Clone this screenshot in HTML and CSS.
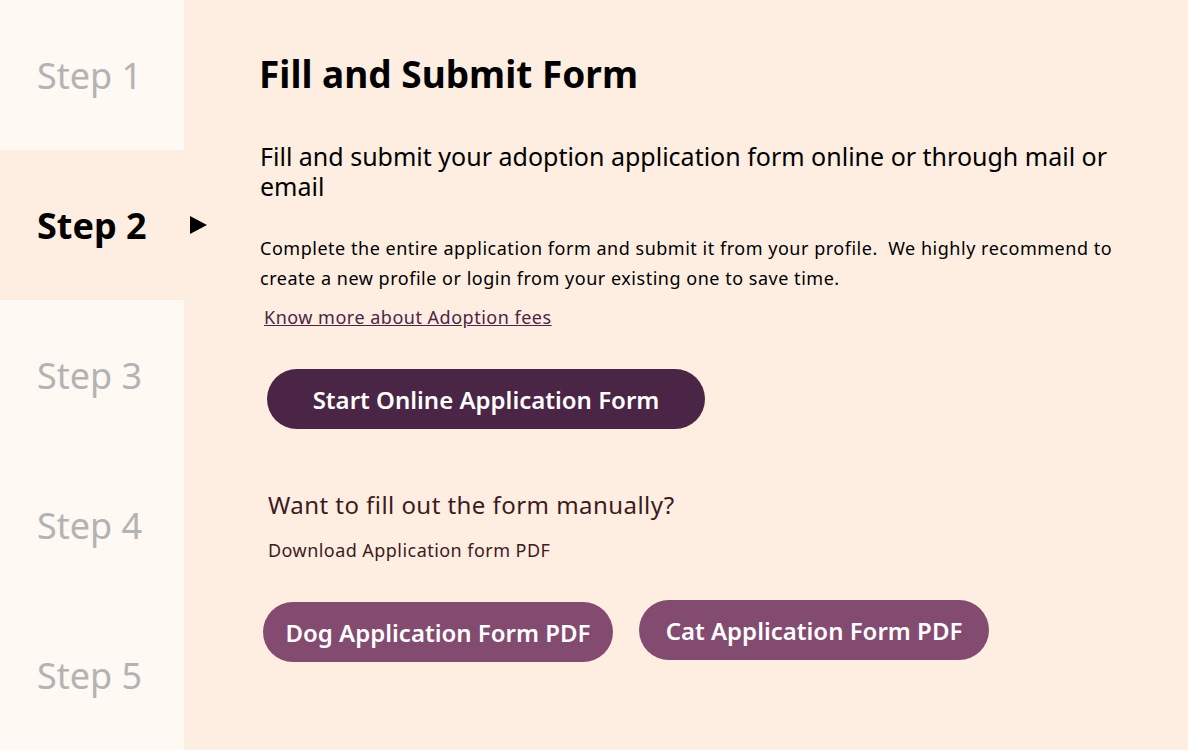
FILE: index.html
```html
<!DOCTYPE html>
<html lang="en">
<head>
<meta charset="utf-8">
<title>Fill and Submit Form</title>
<link rel="stylesheet" href="styles.css">
</head>
<body>
<div class="page">
  <aside class="steps">
    <div class="step">Step 1</div>
    <div class="step active">Step 2 <span class="arrow"></span></div>
    <div class="step">Step 3</div>
    <div class="step">Step 4</div>
    <div class="step">Step 5</div>
  </aside>
  <main class="content">
    <h1 class="title">Fill and Submit Form</h1>
    <p class="lead">Fill and submit your adoption application form online or through mail or email</p>
    <p class="body">Complete the entire application form and submit it from your profile.&nbsp; We highly recommend to create a new profile or login from your existing one to save time.</p>
    <a class="link" href="#">Know more about Adoption fees</a>
    <div class="primary-row"><a class="btn btn-dark" href="#">Start Online Application Form</a></div>
    <p class="manual">Want to fill out the form manually?</p>
    <p class="download">Download Application form PDF</p>
    <div class="pdf-row">
      <a class="btn btn-light dog" href="#">Dog Application Form PDF</a>
      <a class="btn btn-light cat" href="#">Cat Application Form PDF</a>
    </div>
  </main>
</div>
</body>
</html>
```

FILE: styles.css
```css
html, body {
  margin: 0;
  padding: 0;
}
body {
  font-family: "Noto Sans", "Open Sans", sans-serif;
  background: #feeee1;
}
.page {
  display: flex;
  width: 1188px;
  height: 750px;
  overflow: hidden;
}
.steps {
  width: 184px;
  flex: none;
  background: #fff8f3;
  display: flex;
  flex-direction: column;
}
.step {
  height: 150px;
  flex: none;
  display: flex;
  align-items: center;
  padding-left: 37px;
  font-size: 36px;
  color: #b3b3b3;
  position: relative;
  box-sizing: border-box;
}
.step.active {
  background: #feeee1;
  color: #000;
  font-weight: 700;
  width: 230px;
}
.arrow {
  position: absolute;
  left: 190px;
  top: 66px;
  width: 0;
  height: 0;
  border-top: 9px solid transparent;
  border-bottom: 9px solid transparent;
  border-left: 17px solid #000;
}
.content {
  flex: 1;
  padding: 52px 60px 0 76px;
  color: #000;
}
.title {
  margin: 0 0 0 -1px;
  font-size: 37px;
  font-weight: 700;
  line-height: 44px;
}
.lead {
  margin: 45px 0 0 0;
  font-size: 25px;
  line-height: 30px;
}
.body {
  margin: 32px 0 0 0;
  font-size: 18px;
  line-height: 30px;
  letter-spacing: 0.52px;
}
.link {
  display: inline-block;
  margin: 13px 0 0 4px;
  font-size: 18px;
  line-height: 22px;
  color: #4b2545;
  letter-spacing: 0.5px;
}
.primary-row {
  margin-top: 40px;
  display: flex;
}
.btn {
  display: inline-flex;
  align-items: center;
  justify-content: center;
  height: 60px;
  border-radius: 30px;
  color: #fff;
  text-decoration: none;
  font-size: 24px;
  font-weight: 600;
  box-sizing: border-box;
}
.btn-dark {
  margin-left: 7px;
  width: 438px;
  background: #4b2545;
}
.manual {
  margin: 61px 0 0 8px;
  font-size: 24px;
  line-height: 30px;
  color: #3d1a1d;
  letter-spacing: 0.45px;
}
.download {
  margin: 19px 0 0 8px;
  font-size: 18px;
  line-height: 22px;
  color: #3d1a1d;
  letter-spacing: 0.45px;
}
.pdf-row {
  margin-top: 39px;
  display: flex;
  align-items: flex-start;
  gap: 26px;
  margin-left: 3px;
}
.btn-light {
  width: 350px;
  background: #834b6f;
}
.dog {
  margin-top: 2px;
}
```
